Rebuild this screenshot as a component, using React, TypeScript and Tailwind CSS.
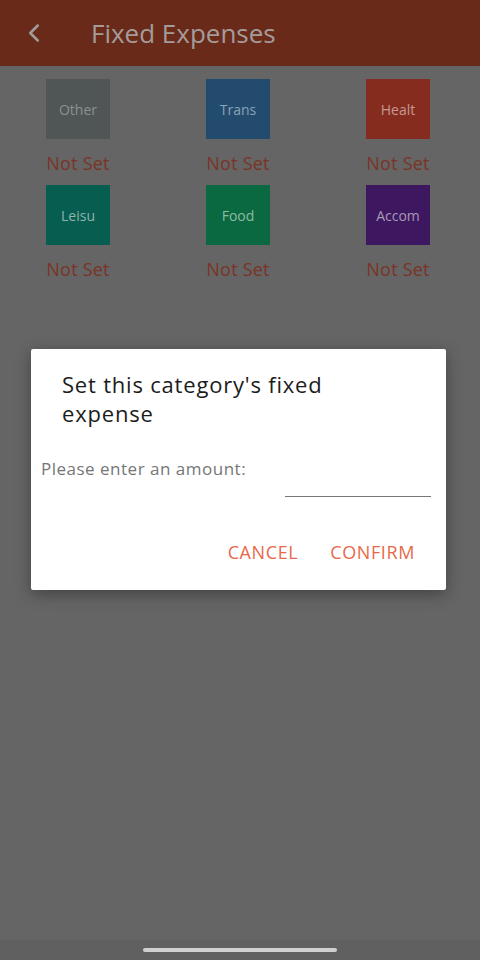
import { ChevronLeft } from 'lucide-react';

const categories = [
  { label: 'Other', color: 'bg-[#505656]', text: 'text-[#8a9090]' },
  { label: 'Trans', color: 'bg-[#234b6e]', text: 'text-[#8aa3b8]' },
  { label: 'Healt', color: 'bg-[#862c1f]', text: 'text-[#c49a94]' },
  { label: 'Leisu', color: 'bg-[#075d50]', text: 'text-[#8fb3ac]' },
  { label: 'Food', color: 'bg-[#0a6940]', text: 'text-[#8fb9a3]' },
  { label: 'Accom', color: 'bg-[#3d1860]', text: 'text-[#a898b8]' },
];

export default function App() {
  return (
    <div
      className="relative w-[480px] h-[960px] overflow-hidden bg-[#656565]"
      style={{ fontFamily: '"Open Sans", Lato, sans-serif' }}
    >
      {/* Header */}
      <div className="flex items-center h-[66px] bg-[#6a2a19]">
        <ChevronLeft size={30} strokeWidth={2} className="ml-[19px] text-[#a09a98]" />
        <h1 className="ml-[42px] text-[26px] text-[#a39c9a]">Fixed Expenses</h1>
      </div>

      {/* Category grid */}
      <div className="grid grid-cols-[repeat(3,160px)] ml-[-2px] gap-y-[8px] pt-[13px]">
        {categories.map((c) => (
          <div key={c.label} className="flex flex-col items-center">
            <div className={`flex items-center justify-center w-[64px] h-[60px] ${c.color}`}>
              <span className={`text-[14px] ${c.text}`}>{c.label}</span>
            </div>
            <span className="mt-[10px] text-[18px] leading-[28px] tracking-[0.2px] text-[#7a3426]">Not Set</span>
          </div>
        ))}
      </div>

      {/* Dialog */}
      <div className="absolute left-[31px] top-[349px] w-[415px] h-[241px] bg-white rounded-[2px] shadow-[0_4px_16px_rgba(0,0,0,0.35)]">
        <div className="pl-[31px] pr-[20px] pt-[21px]">
          <h2 className="text-[22px] leading-[29px] tracking-[0.8px] text-[#1c1c1c]">
            Set this category's fixed
            <br />
            expense
          </h2>
        </div>
        <div className="pl-[10px] pt-[28px] text-[17px] tracking-[0.5px] text-[#767676]">
          Please enter an amount:
        </div>
        <div className="flex justify-end pr-[15px] pt-[14px]">
          <div className="w-[146px] h-[1px] bg-[#777777]" />
        </div>
        <div className="flex justify-end gap-[32px] pr-[31px] pt-[42px]">
          <button className="text-[18px] tracking-[0.6px] text-[#e8694a]">CANCEL</button>
          <button className="text-[18px] tracking-[0.6px] text-[#e8694a]">CONFIRM</button>
        </div>
      </div>

      {/* Home indicator */}
      <div className="absolute left-0 bottom-0 w-full h-[20px] bg-[#606060] flex justify-center">
        <div className="mt-[8px] w-[194px] h-[4px] rounded-full bg-[#d0d0d0]" />
      </div>
    </div>
  );
}
